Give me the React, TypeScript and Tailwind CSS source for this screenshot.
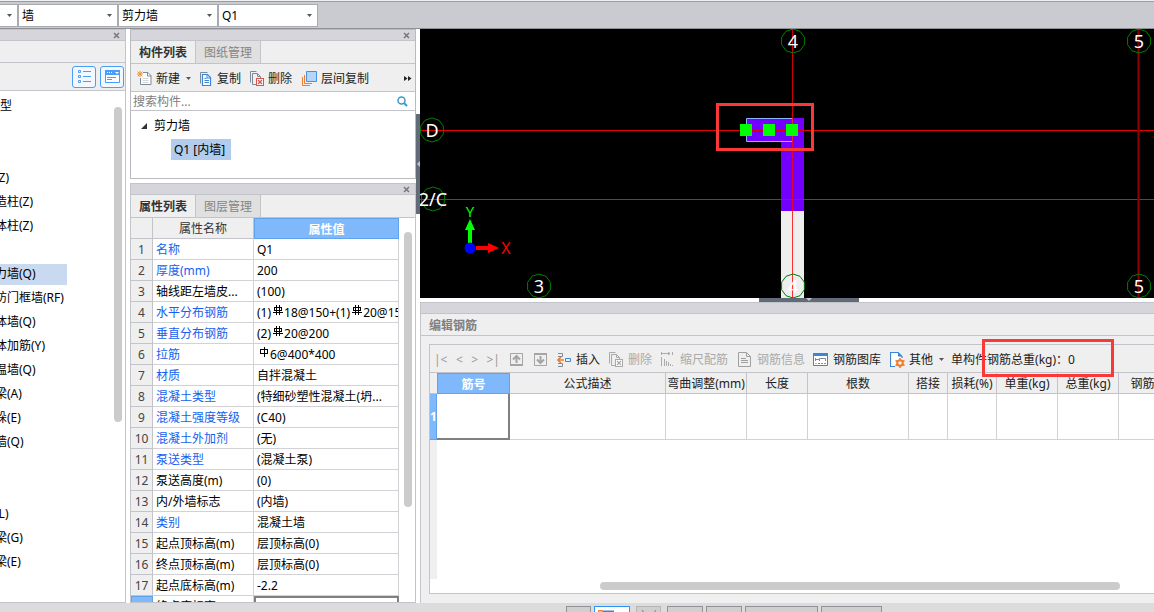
import React from "react";

type Line = { name: string; indent?: boolean; selected?: boolean };

const componentTypes: Line[] = [
  { name: "类型", indent: true },
  { name: "" },
  { name: "" },
  { name: "柱(Z)" },
  { name: "构造柱(Z)" },
  { name: "砌体柱(Z)" },
  { name: "" },
  { name: "剪力墙(Q)", selected: true },
  { name: "人防门框墙(RF)" },
  { name: "砌体墙(Q)" },
  { name: "砌体加筋(Y)" },
  { name: "保温墙(Q)" },
  { name: "暗梁(A)" },
  { name: "墙垛(E)" },
  { name: "幕墙(Q)" },
  { name: "" },
  { name: "" },
  { name: "梁(L)" },
  { name: "连梁(G)" },
  { name: "圈梁(E)" },
];

function Rebar({ ribbed = true }: { ribbed?: boolean }) {
  return (
    <svg className="mr-px ml-0.5 inline-block h-3 w-2.5 align-baseline" viewBox="0 0 10 12" fill="none" stroke="#000" shapeRendering="crispEdges">
      {ribbed ? (
        <path d="M1 2.5h8M1 5.5h8M0 7.5h10M1.5 2v4M8.5 2v4M3.5 0v10M6.5 0v10" strokeWidth="1" />
      ) : (
        <path d="M1 2.5h8M1 6.5h8M1.5 3v3M8.5 3v3M5.5 0v10" strokeWidth="1" />
      )}
    </svg>
  );
}

const properties: { name: string; value: React.ReactNode; blue?: boolean }[] = [
  { name: "名称", value: "Q1", blue: true },
  { name: "厚度(mm)", value: "200", blue: true },
  { name: "轴线距左墙皮...", value: "(100)" },
  { name: "水平分布钢筋", value: <>(1)<Rebar />18@150+(1)<Rebar />20@150</>, blue: true },
  { name: "垂直分布钢筋", value: <>(2)<Rebar />20@200</>, blue: true },
  { name: "拉筋", value: <><Rebar ribbed={false} />6@400*400</>, blue: true },
  { name: "材质", value: "自拌混凝土", blue: true },
  { name: "混凝土类型", value: "(特细砂塑性混凝土(坍...", blue: true },
  { name: "混凝土强度等级", value: "(C40)", blue: true },
  { name: "混凝土外加剂", value: "(无)", blue: true },
  { name: "泵送类型", value: "(混凝土泵)", blue: true },
  { name: "泵送高度(m)", value: "(0)" },
  { name: "内/外墙标志", value: "(内墙)" },
  { name: "类别", value: "混凝土墙", blue: true },
  { name: "起点顶标高(m)", value: "层顶标高(0)" },
  { name: "终点顶标高(m)", value: "层顶标高(0)" },
  { name: "起点底标高(m)", value: "-2.2" },
];

function Caret() {
  return (
    <svg className="h-[3px] w-[5px] shrink-0" viewBox="0 0 5 3" fill="#555">
      <path d="M0 0h5L2.5 3z" />
    </svg>
  );
}

function CloseIcon() {
  return (
    <svg className="h-[7px] w-[7px]" viewBox="0 0 7 7" stroke="#777" strokeWidth="1.5" fill="none">
      <path d="M1 1l5 5M6 1L1 6" />
    </svg>
  );
}

function TitleStrip() {
  return (
    <div className="flex h-[11px] shrink-0 items-center justify-end border-b border-[#c3c4ca] bg-[#d5d5db] pr-[5px]">
      <button aria-label="关闭">
        <CloseIcon />
      </button>
    </div>
  );
}

function Tabs({ active, other }: { active: string; other: string }) {
  return (
    <div className="flex h-[23px] shrink-0 border-b border-[#c3c4ca]" role="tablist">
      <button role="tab" aria-selected="true" className="w-16 pt-0.5 font-bold text-[#333]">{active}</button>
      <button role="tab" aria-selected="false" className="w-[66px] border-x border-[#c3c4ca] bg-[#e0e0e0] pt-0.5 text-[#858585]">{other}</button>
    </div>
  );
}

function Combo({ label, value, width }: { label: string; value: string; width: string }) {
  return (
    <div className={"relative flex h-[23px] items-center border border-[#a9abb0] bg-white " + width}>
      <select aria-label={label} className="h-full w-full appearance-none bg-transparent pt-px pl-[3px] text-black outline-none">
        <option>{value}</option>
      </select>
      <span className="pointer-events-none absolute right-[5px] flex">
        <Caret />
      </span>
    </div>
  );
}

function CopyIcon() {
  return (
    <svg className="h-4 w-[13px]" viewBox="0 0 13 16" fill="none">
      <path d="M1.5 12.5V1.5h7" stroke="#7d8b99" />
      <path d="M3.5 3.5h5l3 3v8h-8z" stroke="#3a85d8" fill="#fff" strokeWidth="1.2" />
      <path d="M8 3.5v3.5h3.5" stroke="#3a85d8" />
      <path d="M5.5 7.5h2M5.5 9.5h4.500M5.500 11.500h4.500" stroke="#3a85d8" />
    </svg>
  );
}

function DeleteIcon({ muted = false }: { muted?: boolean }) {
  const edge = muted ? "#aaa" : "#7d8b99";
  const box = muted ? "#aaa" : "#d9534f";
  return (
    <svg className="h-[15px] w-[15px]" viewBox="0 0 15 15" fill="none">
      <path d="M1.500 11.500V.5h6" stroke={edge} />
      <path d="M7 13.500H3.500v-11h5l3 3V7M8.500 2.500v3h3" stroke={edge} />
      <rect x="7.500" y="7.500" width="7" height="7" stroke={box} fill="#fff" />
      <path d="M9 9l4 4M13 9l-4 4" stroke={box} strokeWidth="1.300" />
    </svg>
  );
}

function TypePanel() {
  return (
    <aside className="flex w-[126px] shrink-0 flex-col border-y border-r border-[#c3c4ca] bg-white">
      <TitleStrip />
      <div className="h-[22px] shrink-0 border-b border-[#c3c4ca] bg-[#efefef]" />
      <div className="flex h-7 shrink-0 items-center justify-end gap-1 border-b border-[#c3c4ca] bg-[#efefef] pr-px">
        <button aria-label="列表视图" className="flex h-[22px] w-6 items-center justify-center rounded-[3px] border border-[#4a9df8] bg-[#f3f8fe]">
          <svg className="h-[13px] w-[13px]" viewBox="0 0 13 13" fill="none" stroke="#4a9df8">
            <path d="M.5.500h2v2h-2zM.500 5.500h2v2h-2zM.500 10.500h2v2h-2zM5 1.500h8M5 6.500h8M5 11.500h8" />
          </svg>
        </button>
        <button aria-label="窗口视图" className="flex h-[22px] w-6 items-center justify-center rounded-[3px] border border-[#4a9df8] bg-[#f3f8fe]">
          <svg className="h-[13px] w-[15px]" viewBox="0 0 15 13" fill="none" stroke="#4a9df8">
            <path d="M.5.500h14v12H.500z" fill="#fff" />
            <path d="M0 0h15v5H0z" fill="#4a9df8" stroke="none" />
            <path d="M2 2.500h1M4 2.500h1M6 2.500h1" stroke="#fff" />
            <path d="M10 2h4l-2 2z" fill="#fff" stroke="none" />
            <path d="M2 7.500h9M2 9.500h5" />
          </svg>
        </button>
      </div>
      <div className="relative min-h-0 flex-1 overflow-hidden pt-[3px]">
        <ul>
          {componentTypes.map((line, i) => (
            <li key={i} className="flex h-6 items-center">
              <span className={line.selected ? "flex h-[21px] w-[67px] items-center bg-[#c9d9f0]" : "flex w-full items-center"}>
                <span className={line.indent ? "-ml-3 whitespace-nowrap" : "-ml-[17px] whitespace-nowrap"}>{line.name}</span>
              </span>
            </li>
          ))}
        </ul>
        <div className="absolute top-4 right-[3px] h-[315px] w-2 rounded-full bg-[#cbcbcb]" />
      </div>
    </aside>
  );
}

function ComponentList() {
  return (
    <section className="flex h-[150px] shrink-0 flex-col border border-[#b9bac0] bg-white">
      <TitleStrip />
      <div className="bg-[#efefef]">
        <Tabs active="构件列表" other="图纸管理" />
      </div>
      <div className="flex h-7 shrink-0 items-center border-b border-[#c3c4ca] bg-[#efefef] pt-0.5 pr-[3px] pl-1.5 text-[#222]">
        <button className="flex items-center gap-1">
          <svg className="h-[15px] w-[15px]" viewBox="0 0 15 15" fill="none">
            <path d="M6 1.500h5l3 3v9H3.500V7" stroke="#7d8b99" fill="#fff" />
            <path d="M10.500 1.500V5H14" stroke="#7d8b99" />
            <path d="M5.500 7.500h6M5.500 9.500h6M5.500 11.500h6" stroke="#d3d6da" />
            <path d="M3 0v6M0 3h6M.700.700l4.600 4.600M5.300.700L.700 5.300" stroke="#f2922b" />
          </svg>
          新建
          <span className="ml-0.5"><Caret /></span>
        </button>
        <button className="ml-2 flex items-center gap-[5px]"><CopyIcon />复制</button>
        <button className="ml-2 flex items-center gap-1"><DeleteIcon />删除</button>
        <button className="ml-2.5 flex items-center gap-1">
          <svg className="h-[15px] w-[15px]" viewBox="0 0 15 15" fill="none">
            <path d="M.500 6v8.500H8M2.500 4v8.500H10" stroke="#ef7d2d" />
            <path d="M4.500.500h10v10h-10z" fill="#b5d5fb" stroke="#4a8fe0" />
          </svg>
          层间复制
        </button>
        <button aria-label="更多" className="ml-auto">
          <svg className="h-[5px] w-2" viewBox="0 0 8 5" fill="#222"><path d="M0 0l3.500 2.500L0 5zM4 0l3.500 2.500L4 5z" /></svg>
        </button>
      </div>
      <div className="flex h-[19px] shrink-0 items-center border-b border-[#c3c4ca] pr-[7px] pl-0.5">
        <input aria-label="搜索构件" placeholder="搜索构件..." className="min-w-0 flex-1 pt-0.5 outline-none placeholder:text-[#808080]" />
        <svg className="h-[11px] w-[11px]" viewBox="0 0 11 11" fill="none" stroke="#3d97cf">
          <circle cx="4.500" cy="4.500" r="3.500" strokeWidth="1.500" />
          <path d="M7 7l3 3" strokeWidth="2" />
        </svg>
      </div>
      <div className="flex flex-col items-start pt-1">
        <div className="flex h-[22px] items-center gap-[7px] pl-2.5">
          <svg className="h-1.5 w-1.5" viewBox="0 0 6 6" fill="#333"><path d="M6 0v6H0z" /></svg>
          剪力墙
        </div>
        <div className="mt-0.5 ml-10 flex h-[21px] w-[60px] items-center bg-[#b1ccec] pl-[3px] whitespace-nowrap">Q1 [内墙]</div>
      </div>
    </section>
  );
}

function PropertyList() {
  return (
    <section className="mt-1 flex min-h-0 flex-1 flex-col border border-[#c3c4ca] bg-white">
      <TitleStrip />
      <div className="bg-[#efefef]">
        <Tabs active="属性列表" other="图层管理" />
      </div>
      <div className="relative min-h-0 flex-1 overflow-hidden">
        <table className="w-[268px] table-fixed border-separate border-spacing-0">
          <colgroup>
            <col className="w-[22px]" />
            <col className="w-[101px]" />
            <col className="w-[145px]" />
          </colgroup>
          <thead>
            <tr className="h-[21px]">
              <th className="border-r border-b border-[#c3c4ca] bg-[#efefef] p-0" />
              <th className="border-r border-b border-[#c3c4ca] bg-[#efefef] p-0 pt-0.5 font-normal text-[#333]">属性名称</th>
              <th className="border border-[#62a2ea] bg-[#80b9fb] p-0 pt-0.5 font-bold text-white">属性值</th>
            </tr>
          </thead>
          <tbody>
            {properties.map((p, i) => (
              <tr key={p.name} className="h-[21px]">
                <th scope="row" className="border-r border-b border-[#c3c4ca] bg-[#efefef] p-0 pt-0.5 font-normal text-[#444]">{i + 1}</th>
                <td className={"overflow-hidden border-r border-b border-[#d2d2d6] p-0 pt-0.5 pl-[3px] whitespace-nowrap " + (p.blue ? "text-[#1560f0]" : "text-black")}>{p.name}</td>
                <td className="overflow-hidden border-r border-b border-[#d2d2d6] p-0 pt-0.5 pl-[3px] whitespace-nowrap">{p.value}</td>
              </tr>
            ))}
            <tr className="h-[21px]">
              <th scope="row" className="border border-[#62a2ea] bg-[#80b9fb] p-0 font-bold text-white" aria-label="18" />
              <td className="border-r border-b border-[#d2d2d6] p-0 pt-0.5 pl-[3px]">终点底标高(m)</td>
              <td className="border-2 border-[#808080] p-0" />
            </tr>
          </tbody>
        </table>
        <div className="absolute top-3.5 right-[3px] h-[275px] w-2 rounded-full bg-[#cbcbcb]" />
      </div>
    </section>
  );
}

const bubbles = [
  { x: 432, y: 130, t: "D" },
  { x: 433, y: 199, t: "2/C" },
  { x: 539, y: 286, t: "3" },
  { x: 793, y: 41, t: "4" },
  { x: 793, y: 286, t: "4" },
  { x: 1139, y: 41, t: "5" },
  { x: 1139, y: 286, t: "5" },
];

function Bubble({ x, y, t }: { x: number; y: number; t: string }) {
  return (
    <g transform={`translate(${x - 420} ${y - 29})`}>
      <path d="M0-12L7-9.700 11.400-3.700V3.700L7 9.700 0 12-7 9.700-11.400 3.700V-3.700L-7-9.700z" fill="none" stroke="#008000" />
      <text y="6.500" textAnchor="middle" fontSize="18" fill="#fff">{t}</text>
    </g>
  );
}

function DrawingView() {
  return (
    <div className="relative h-[269px] shrink-0 overflow-hidden bg-black">
      <svg className="h-full w-full" role="img" aria-label="平面图">
        <path d="M361 89h23v93h-23z" fill="#7300ff" />
        <path d="M361 182h23v87h-23z" fill="#eee" />
        <path d="M326.500 89.500h46v23h-46z" fill="#7300ff" stroke="#8fb4ff" />
        <path d="M372.500 0v269" stroke="#ff0000" strokeOpacity=".8" />
        <rect y="101" width="100%" height="1" fill="#e00000" />
        <rect y="170" width="100%" height="1" fill="#ff0000" />
        <path d="M718.500 0v269" stroke="#900000" strokeWidth="2" />
        <g fill="#00ff00">
          <path d="M320 95h12v12h-12zM343 95h12v12h-12zM366 95h12v12h-12z" />
          <path d="M48 214v-13h-3l5-11 5 11h-3v13z" />
        </g>
        <path d="M56 217h12v-3l11 5-11 5v-3H56z" fill="#ff0000" />
        <circle cx="50" cy="219" r="5.500" fill="#0000ff" />
        <text x="50" y="188" textAnchor="middle" fontSize="15" fill="#00ff00">Y</text>
        <text x="86" y="225" textAnchor="middle" fontSize="16" fill="#ff0000">X</text>
        {bubbles.map((b) => (
          <Bubble key={`${b.x}-${b.y}`} {...b} />
        ))}
      </svg>
      <div className="absolute top-[74px] left-[296px] h-12 w-[98px] border-3 border-[#fa3838]" />
    </div>
  );
}

const rebarColumns = [
  { name: "公式描述", width: "w-[156px]" },
  { name: "弯曲调整(mm)", width: "w-[81px]" },
  { name: "长度", width: "w-[61px]" },
  { name: "根数", width: "w-[101px]" },
  { name: "搭接", width: "w-[39px]" },
  { name: "损耗(%)", width: "w-[49px]" },
  { name: "单重(kg)", width: "w-[61px]" },
  { name: "总重(kg)", width: "w-[61px]" },
  { name: "钢筋", width: "w-[48px]" },
];

function MoveIcon({ down = false }: { down?: boolean }) {
  return (
    <svg className="h-[13px] w-[13px]" viewBox="0 0 13 13" fill="none" stroke="#a5a5a5">
      <path d="M.500.500h12v12H.500z" />
      <path d={down ? "M0 1h13" : "M0 12h13"} strokeWidth="2" />
      <path d={down ? "M6.500 3v7M3 6.500L6.500 10 10 6.500" : "M6.500 10V3M3 6.500L6.500 3 10 6.500"} strokeWidth="2" />
    </svg>
  );
}

function RebarToolbar() {
  const nav = "text-[#999] leading-4";
  return (
    <div className="relative z-10 flex h-[27px] shrink-0 items-center pt-0.5 pl-1 whitespace-nowrap text-[#222]">
      <div className="flex w-[66px] items-center justify-between">
        <button className={nav} aria-label="首条">|&lt;</button>
        <button className={nav} aria-label="上一条">&lt;</button>
        <button className={nav} aria-label="下一条">&gt;</button>
        <button className={nav} aria-label="末条">&gt;|</button>
      </div>
      <button className="ml-2.5" aria-label="上移"><MoveIcon /></button>
      <button className="ml-[11px]" aria-label="下移"><MoveIcon down /></button>
      <button className="ml-2.5 flex items-center gap-1">
        <svg className="h-4 w-[15px]" viewBox="0 0 15 16" fill="none">
          <path d="M1 1.500h4.500v3H1M1 11.500h4.500v3H1" stroke="#7d8b99" />
          <path d="M8.500 6.500h5v3h-5z" stroke="#3a85d8" />
          <path d="M7 8H2M4 5L1 8l3 3" stroke="#ef7d2d" strokeWidth="1.600" />
        </svg>
        插入
      </button>
      <button className="ml-2 flex items-center gap-[5px] text-[#aaa]"><DeleteIcon muted />删除</button>
      <button className="ml-2 flex items-center gap-[5px] text-[#aaa]">
        <svg className="h-[15px] w-[15px]" viewBox="0 0 15 15" fill="none" stroke="#aaa">
          <path d="M1.500 0v3M1 1.500h9M8 0l2 1.500L8 3M12.500 0v3M1.500 5v9M4.500 7v7M6.500 9v5M8.500 10v4M10.500 12v2M12.500 13v1" />
        </svg>
        缩尺配筋
      </button>
      <button className="ml-2.5 flex items-center gap-[5px] text-[#aaa]">
        <svg className="h-[15px] w-[14px]" viewBox="0 0 14 15" fill="none" stroke="#a0a0a0">
          <path d="M.500.500h8l4 4v10H.500zM8.500.500v4h4M3 6.500h5M3 8.500h7M3 10.500h7" />
        </svg>
        钢筋信息
      </button>
      <button className="ml-2 flex items-center gap-[5px]">
        <svg className="h-[13px] w-[15px]" viewBox="0 0 15 13" fill="none">
          <path d="M.500.500h14v12H.500z" fill="#fff" stroke="#3a85d8" />
          <path d="M0 0h15v3H0z" fill="#3a85d8" />
          <path d="M2.500 5v3M2.500 6.500h4M6.500 8V5.500h6V8" stroke="#7d8b99" />
          <path d="M2 10.500h2" stroke="#f3b73b" /><path d="M5 10.500h2" stroke="#e25a4f" />
          <path d="M8 10.500h2" stroke="#4aa3e8" /><path d="M11 10.500h2" stroke="#5fb760" />
        </svg>
        钢筋图库
      </button>
      <button className="ml-[9px] flex items-center gap-1">
        <svg className="h-4 w-[15px]" viewBox="0 0 15 16" fill="none">
          <path d="M5 14.500H.500V.500h7.500l4 4V6" fill="#fff" stroke="#3a85d8" strokeWidth="1.200" />
          <path d="M8 .500v4h4z" fill="#3a85d8" />
          <circle cx="10" cy="11" r="2.800" stroke="#ef7d2d" strokeWidth="2" />
          <path d="M10 6v2M10 14v2M5.500 8.500l2 1M12.500 12.500l2 1M5.500 13.500l2-1M12.500 9.500l2-1" stroke="#ef7d2d" strokeWidth="1.500" />
        </svg>
        其他
        <span className="ml-0.5"><Caret /></span>
      </button>
      <span className="ml-[7px]">单构件钢筋总重(kg)：0</span>
      <div className="absolute -top-1.5 left-[552px] h-[38px] w-[132px] border-3 border-[#fa3838]" />
    </div>
  );
}

function RebarEditor() {
  return (
    <section className="mt-1 flex min-h-0 flex-1 flex-col border-t border-l border-[#c3c4ca] bg-[#efefef]">
      <div className="h-[11px] shrink-0 border-b border-[#c3c4ca] bg-[#d5d5db]" />
      <h2 className="flex h-[22px] shrink-0 items-center border-b border-[#c3c4ca] pt-0.5 pl-2 font-bold text-[#808080]">编辑钢筋</h2>
      <div className="mt-2 mb-[9px] ml-2 flex min-h-0 flex-1 flex-col border-y border-l border-[#c3c4ca]">
        <RebarToolbar />
        <div className="relative min-h-0 flex-1 overflow-hidden border-t border-[#c3c4ca] bg-white">
          <div className="flex h-full flex-col pb-3.5">
            <table className="w-[737px] shrink-0 table-fixed border-separate border-spacing-0">
              <colgroup>
                <col className="w-[7px]" />
                <col className="w-[73px]" />
                {rebarColumns.map((c) => <col key={c.name} className={c.width} />)}
              </colgroup>
              <thead>
                <tr className="h-[21px]">
                  <th className="border-b border-[#c3c4ca] bg-[#efefef] p-0" />
                  <th className="border border-[#62a2ea] bg-[#80b9fb] p-0 pt-0.5 font-bold text-white">筋号</th>
                  {rebarColumns.map((c) => (
                    <th key={c.name} className="border-r border-b border-[#c3c4ca] bg-[#efefef] p-0 pt-0.5 font-normal whitespace-nowrap text-[#222]">{c.name}</th>
                  ))}
                </tr>
              </thead>
              <tbody>
                <tr className="h-[46px]">
                  <th scope="row" className="border-r border-b border-[#62a2ea] bg-[#80b9fb] p-0 font-bold text-white">1</th>
                  <td className="border-r-2 border-b-2 border-[#808080] p-0" />
                  {rebarColumns.map((c) => <td key={c.name} className="border-r border-b border-[#d2d2d6] p-0" />)}
                </tr>
              </tbody>
            </table>
            <div className="w-[7px] flex-1 bg-[#efefef]" />
          </div>
          <div className="absolute right-[34px] bottom-[3px] left-[170px] h-2 rounded-full bg-[#cbcbcb]" />
        </div>
      </div>
    </section>
  );
}

function StatusBar() {
  const box = "h-4 shrink-0 border border-[#929296] bg-[#cfcfcf] ";
  return (
    <footer className="flex h-[9px] shrink-0 gap-[3px] overflow-hidden bg-[#dcdcde] pt-[3px] pl-[566px]">
      <button aria-label="选择" className={box + "w-[25px]"} />
      <button aria-label="图层" className="flex h-4 w-9 shrink-0 border border-[#2d95f5] bg-white pt-[3px] pl-[3px]">
        <svg className="h-2.5 w-4" viewBox="0 0 16 10" fill="none">
          <path d="M.500.500h4v3h-4z" fill="#f8c46a" stroke="#ef7d2d" />
          <path d="M5 1.500h11" stroke="#3a85d8" strokeWidth="2" />
        </svg>
      </button>
      <button aria-label="捕捉" className="ml-[3px] flex h-4 w-[25px] shrink-0 justify-center border border-[#b5b5b8] bg-[#cfcfcf] pt-[3px]">
        <svg className="h-2.5 w-4" viewBox="0 0 16 10" fill="none" stroke="#808080"><path d="M1 0l3 4M15 0l-3 4" /></svg>
      </button>
      <button aria-label="正交" className={box + "ml-[3px] w-9"} />
      <button aria-label="顶点" className={box + "w-9"} />
      <button aria-label="中点" className={box + "w-[73px]"} />
      <button aria-label="交点" className={box + "w-[61px]"} />
    </footer>
  );
}

export default function App() {
  return (
    <div className="flex h-screen flex-col overflow-hidden bg-white font-['Noto_Sans','Noto_Sans_CJK_SC',sans-serif] text-xs text-black">
      <header className="flex h-[29px] shrink-0 items-center border-b border-[#8e9096] bg-[#c9cbd0] pt-0.5 shadow-[inset_0_1px_0_#eef0f2,inset_0_2px_0_#9a9ca1]">
        <Combo label="楼层" value="" width="w-[18px] border-l-0" />
        <Combo label="构件类别" value="墙" width="w-[100px]" />
        <Combo label="构件类型" value="剪力墙" width="w-[100px]" />
        <Combo label="构件" value="Q1" width="w-[100px]" />
      </header>
      <div className="flex min-h-0 flex-1">
        <TypePanel />
        <div className="ml-1 flex w-[286px] shrink-0 flex-col">
          <ComponentList />
          <PropertyList />
        </div>
        <button aria-label="折叠面板" className="mt-[85px] flex h-[100px] w-1 shrink-0 items-center justify-end bg-[#626c78]">
          <svg className="h-1.5 w-[3px]" viewBox="0 0 3 6" fill="#c3c8ce"><path d="M3 0v6L0 3z" /></svg>
        </button>
        <main className="relative flex min-w-0 flex-1 flex-col">
          <DrawingView />
          <RebarEditor />
          <button aria-label="折叠编辑区" className="absolute top-[269px] left-[339px] flex h-1 w-[100px] justify-center bg-[#626c78]">
            <svg className="h-[3px] w-1.5" viewBox="0 0 6 3" fill="#c3c8ce"><path d="M0 0h6L3 3z" /></svg>
          </button>
        </main>
      </div>
      <StatusBar />
    </div>
  );
}
